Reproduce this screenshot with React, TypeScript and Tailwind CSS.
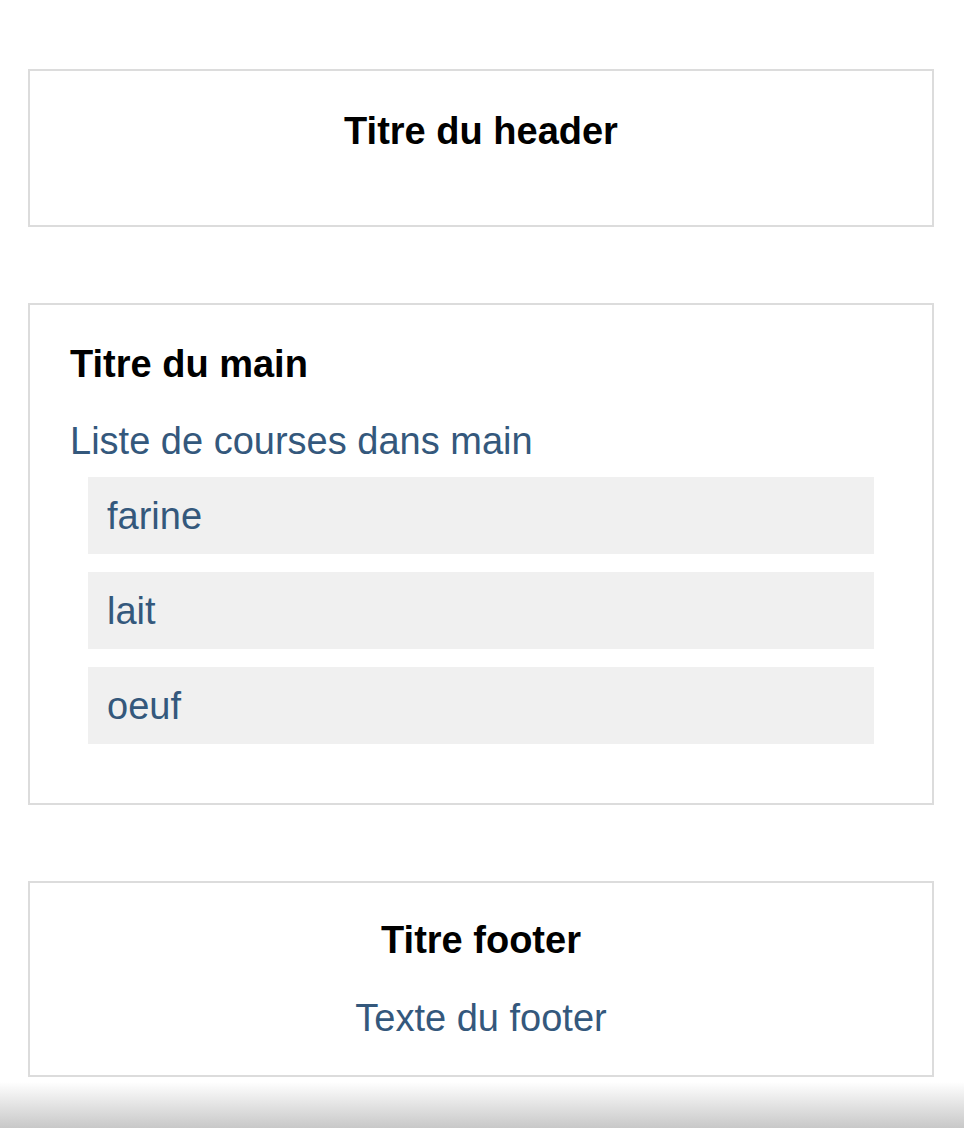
import React from "react";

const items = ["farine", "lait", "oeuf"];

function App() {
  return (
    <div className="min-h-[1128px] bg-white font-['Liberation_Sans',Arial,sans-serif] text-[38px] leading-[44px] flex flex-col">
      <header className="mt-[69px] ml-[28px] w-[906px] h-[158px] border-2 border-[#dcdcdc] pt-[38px] text-center">
        <h1 className="font-bold text-black">Titre du header</h1>
      </header>

      <main className="mt-[76px] ml-[28px] w-[906px] border-2 border-[#dcdcdc] pt-[37px] pb-[59px] px-[40px]">
        <h2 className="font-bold text-black">Titre du main</h2>
        <p className="mt-[33px] text-[#34587c]">Liste de courses dans main</p>
        <ul className="mt-[14px] mx-[18px] flex flex-col gap-[18px]">
          {items.map((item) => (
            <li key={item} className="h-[77px] bg-[#f0f0f0] pl-[19px] flex items-center text-[#34587c]">
              {item}
            </li>
          ))}
        </ul>
      </main>

      <footer className="mt-[76px] ml-[28px] w-[906px] border-2 border-[#dcdcdc] pt-[35px] pb-[35px] text-center">
        <h3 className="font-bold text-black">Titre footer</h3>
        <p className="mt-[34px] text-[#34587c]">Texte du footer</p>
      </footer>

      {/* bottom shade */}
      <div className="mt-auto h-[46px] bg-gradient-to-b from-white to-[#c8c8c8]" />
    </div>
  );
}

export default App;
